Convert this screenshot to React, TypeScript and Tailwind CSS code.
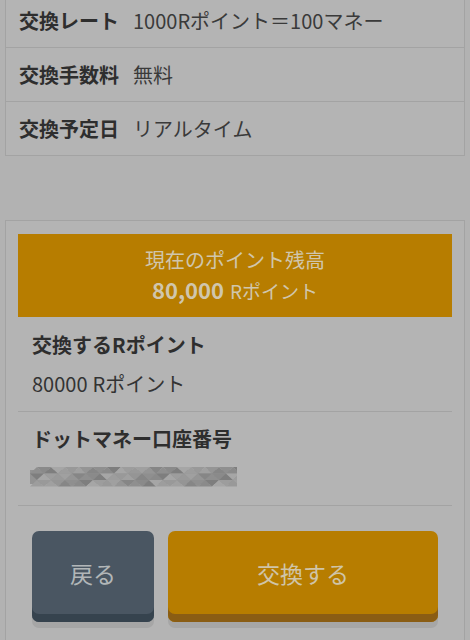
import React from 'react';

const greys = ['#8f8f8f', '#9d9d9d', '#868686', '#a6a6a6', '#959595', '#7e7e7e', '#a0a0a0', '#8a8a8a', '#999999'];

// blurred-out account number, drawn as a strip of grey triangles
function Mosaic() {
  const cols = 30;
  const w = 7;
  const tris: React.ReactElement[] = [];
  for (let r = 0; r < 3; r++) {
    for (let c = 0; c < cols; c++) {
      const x = c * w;
      const y = r * 6.5;
      const up = (c + r) % 2 === 0;
      const pts = up
        ? `${x},${y + 6.5} ${x + w},${y} ${x + w * 2},${y + 6.5}`
        : `${x},${y} ${x + w},${y + 6.5} ${x + w * 2},${y}`;
      tris.push(<polygon key={`${r}-${c}`} points={pts} fill={greys[(c * 7 + r * 5) % greys.length]} />);
    }
  }
  return (
    <svg width="207" height="20" viewBox="0 0 207 20" className="block">
      <rect x="0" y="3" width="207" height="14" fill="#939393" />
      {tris}
    </svg>
  );
}

function InfoRow({ label, value, last }: { label: string; value: string; last?: boolean }) {
  return (
    <div className={`flex items-center gap-[14px] px-[13px] py-[14px] leading-[25px] ${last ? '' : 'border-b border-[#a3a3a3]'}`}>
      <span className="font-bold text-[20px] text-[#2e2e2e]">{label}</span>
      <span className="text-[20px] text-[#3a3a3a]">{value}</span>
    </div>
  );
}

export default function App() {
  return (
    <div className="min-h-[640px] h-[640px] overflow-hidden bg-[#b2b2b2] px-[5px] font-['Noto_Sans_CJK_JP',sans-serif]">
      <div className="-mt-[7px] border border-[#a3a3a3] bg-[#b4b4b4]">
        <InfoRow label="交換レート" value="1000Rポイント＝100マネー" />
        <InfoRow label="交換手数料" value="無料" />
        <InfoRow label="交換予定日" value="リアルタイム" last />
      </div>

      <div className="mt-[64px] border border-[#a3a3a3] bg-[#b4b4b4] px-[12px] pt-[13px] pb-[20px]">
        <div className="bg-[#b77d00] h-[83px] flex flex-col items-center justify-center text-[#d0c6ad]">
          <div className="text-[20px] leading-[28px]">現在のポイント残高</div>
          <div className="flex items-baseline gap-[6px] leading-[30px]">
            <span className="text-[22px] font-bold">80,000</span>
            <span className="text-[19px]">Rポイント</span>
          </div>
        </div>

        <div className="px-[14px] pt-[14px] pb-[13px] border-b border-[#a3a3a3]">
          <div className="font-bold text-[20px] leading-[28px] text-[#2e2e2e]">交換するRポイント</div>
          <div className="mt-[11px] flex items-baseline gap-[5px] leading-[28px] text-[#333]">
            <span className="text-[20px]">80000</span>
            <span className="text-[20px]">Rポイント</span>
          </div>
        </div>

        <div className="px-[12px] pt-[13px] pb-[14px] border-b border-[#a3a3a3]">
          <div className="px-[2px] font-bold text-[20px] leading-[28px] text-[#2e2e2e]">ドットマネー口座番号</div>
          <div className="mt-[10px] h-[28px] flex items-center">
            <Mosaic />
          </div>
        </div>

        <div className="px-[14px] pt-[25px] flex gap-[14px]">
          <button className="w-[122px] h-[91px] rounded-[7px] bg-[#4a5662] text-[#b2b6b8] text-[23px] pb-[6px] shadow-[inset_0_-8px_0_#36434e,0_6px_0_#a6a6a6]">
            戻る
          </button>
          <button className="flex-1 h-[91px] rounded-[7px] bg-[#b77d00] text-[#cfc4a8] text-[23px] pb-[6px] shadow-[inset_0_-8px_0_#8a5d14,0_6px_0_#a6a6a6]">
            交換する
          </button>
        </div>
      </div>
    </div>
  );
}
